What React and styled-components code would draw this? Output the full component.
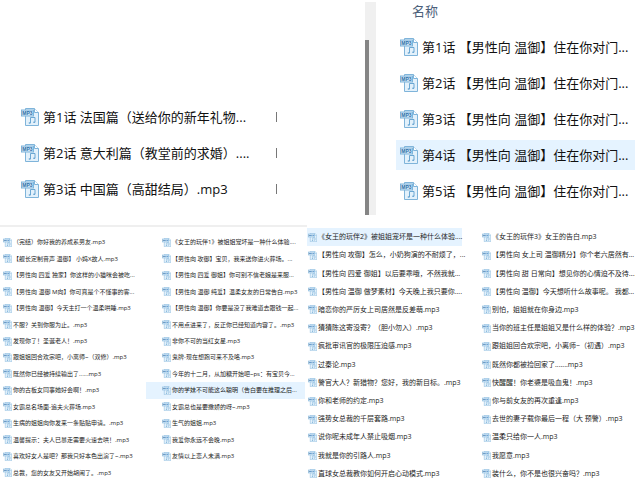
import React from "react";
import styled, { createGlobalStyle } from "styled-components";

const GlobalStyle = createGlobalStyle`
  * {
    box-sizing: border-box;
  }

  body {
    margin: 0;
    background-color: #fff;
    color: #1c1c1c;
    font-family: "Open Sans", "Noto Sans CJK SC", sans-serif;
  }
`;

const endings = [
  "第1话 法国篇（送给你的新年礼物...",
  "第2话 意大利篇（教堂前的求婚）....",
  "第3话 中国篇（高甜结局）.mp3",
];

const episodes = [
  "第1话 【男性向 温御】住在你对门...",
  "第2话 【男性向 温御】住在你对门...",
  "第3话 【男性向 温御】住在你对门...",
  "第4话 【男性向 温御】住在你对门...",
  "第5话 【男性向 温御】住在你对门...",
];

const columnOne = [
  "（完结）你好我的养成系男友.mp3",
  "【舰长定制音声 温御】 小妈X故人.mp3",
  "【男性向 四爱 独家】你这样的小猫咪会被吃...",
  "【男性向 温御 M向】你可真是个不懂事的客...",
  "【男性向 温御】今天主打一个温柔哄睡.mp3",
  "不服？关到你服为止。.mp3",
  "发现你了！圣诞老人！.mp3",
  "跟姐姐回合欢宗吧，小离师~（双修）.mp3",
  "既然你已经被持续输出了......mp3",
  "你的古板女同事她好会啊！.mp3",
  "女霸总名场面-追夫火葬场.mp3",
  "生病的姐姐向你发来一条贴贴申请。.mp3",
  "温馨提示：夫人已暴走需要火速去哄！.mp3",
  "喜欢好女人是吧？那我只好本色出演了~.mp3",
  "总裁，您的女友又开始胡闹了。.mp3",
];

const columnTwo = [
  "《女王的玩伴1》被姐姐宠坏是一种什么体验....",
  "【男性向 攻御】宝贝，我来送你进火葬场。...",
  "【男性向 四爱 御姐】你可别不信老娘是来服...",
  "【男性向 温御 纯爱】温柔女友的日常告白.mp3",
  "【男性向 温御】你要是没了我难道去跟钱一起...",
  "不用点进来了，反正你已经知道内容了。.mp3",
  "非你不可的当红女星.mp3",
  "鬼牌-现在想跑可来不及咯.mp3",
  "今年的十二月，从加糖开始吧~ps：有宝贝今...",
  "你的学妹不可能这么聪明（告白要在推理之后...",
  "女霸总也是要撒娇的呀~.mp3",
  "生气的姐姐.mp3",
  "我爱你永远不会晚.mp3",
  "友情以上恋人未满.mp3",
];

const columnThree = [
  "《女王的玩伴2》被姐姐宠坏是一种什么体验....",
  "【男性向 攻御】怎么，小奶狗演的不耐烦了，...",
  "【男性向 四爱 御姐】以后要乖哦，不然我就...",
  "【男性向 温御 做梦素材】今天晚上我只要你....",
  "暗恋你的严厉女上司居然是反差萌.mp3",
  "猜猜陈这寄没寄？（胆小勿入）.mp3",
  "疯批审讯官的极限压迫感.mp3",
  "过秦论.mp3",
  "警官大人？新猎物？您好，我的新目标。.mp3",
  "你和老师的约定.mp3",
  "强势女总裁的千层套路.mp3",
  "说你呢未成年人禁止吸烟.mp3",
  "我就是你的引路人.mp3",
  "直球女总裁教你如何开启心动模式.mp3",
];

const columnFour = [
  "《女王的玩伴3》女王的告白.mp3",
  "【男性向 女上司 温御精分】你个老六居然有...",
  "【男性向 甜 日常向】想见你的心情迫不及待....",
  "【男性向 温御】今天想听什么故事呢。 我都...",
  "别怕，姐姐就在你身边.mp3",
  "当你的班主任是姐姐又是什么样的体验？.mp3",
  "跟姐姐回合欢宗吧，小离师~（初遇）.mp3",
  "既然你都被捡回家了.......mp3",
  "快醒醒！你老婆是吸血鬼！.mp3",
  "你与前女友的再次重逢.mp3",
  "去世的妻子载你最后一程（大 预警）.mp3",
  "温柔只给你一人.mp3",
  "我愿意.mp3",
  "装什么，你不是也很兴奋吗？.mp3",
];

const Page = styled.main`
  display: flex;
  flex-direction: column;
  min-height: 100vh;
  overflow: hidden;
`;

const TopArea = styled.div`
  display: grid;
  grid-template-columns: 365fr 270fr;
  height: 225px;
`;

const EndingPane = styled.section`
  padding: 102px 0 0 21px;
`;

const EpisodePane = styled.section`
  display: flex;
  gap: 20px;
  padding: 2px 0 10px;
  min-width: 0;
`;

const ScrollTrack = styled.div`
  flex: none;
  width: 11px;
  padding-top: 38px;
  background-color: #f0f0f0;
`;

const ScrollThumb = styled.div`
  width: 4px;
  height: 100%;
  background-color: #858585;
`;

const EpisodeBody = styled.div`
  flex: 1;
  min-width: 0;
`;

const HeaderButton = styled.button`
  display: block;
  height: 19px;
  margin-bottom: 11px;
  padding: 0 16px;
  border: 0;
  background: none;
  color: #4c607a;
  font-family: inherit;
  font-size: 13px;
  line-height: 19px;
`;

const LargeList = styled.ul`
  display: flex;
  flex-direction: column;
  gap: 6px;
  margin: 0;
  padding: 0;
  list-style: none;
`;

const LargeRow = styled.li`
  display: flex;
  align-items: center;
  gap: 4px;
  height: 30px;
  padding-left: ${(props) => (props.$inset ? "4px" : "0")};
  background-color: ${(props) => (props.$selected ? "#e5f3ff" : "transparent")};
  color: #111;
  font-size: 13px;
  line-height: 20px;
  white-space: nowrap;
`;

const EndingName = styled.span`
  width: 229px;
`;

const ColumnMark = styled.span`
  width: 1px;
  height: 10px;
  background-color: #777;
`;

const BottomArea = styled.div`
  flex: 1;
  display: grid;
  grid-template-columns: 307fr 328fr;
`;

const LeftPane = styled.section`
  display: grid;
  grid-template-columns: 146fr 161fr;
  padding: 7px 0 2px;
  border-top: 2px solid #efefef;
`;

const RightPane = styled.section`
  display: grid;
  grid-template-columns: 157fr 171fr;
  padding-top: 3px;
`;

const SmallList = styled.ul`
  display: grid;
  grid-template-rows: repeat(${(props) => props.$rows}, 1fr);
  min-width: 0;
  margin: 0;
  padding: 0;
  list-style: none;
  font-size: ${(props) => props.$size}px;
`;

const SmallRow = styled.li`
  display: flex;
  align-items: center;
  gap: 1px;
  min-width: 0;
  margin-right: 2px;
  padding-left: ${(props) => props.$indent}px;
  background-color: ${(props) => (props.$selected ? "#e5f3ff" : "transparent")};
  line-height: 12px;
  white-space: nowrap;
`;

const IconSvg = styled.svg`
  flex: none;
  width: ${(props) => props.$size}px;
  height: ${(props) => props.$size}px;
`;

const Mp3Icon = ({ size = 18 }) => (
  <IconSvg $size={size} viewBox="0 0 18 18" aria-hidden="true">
    <path d="M4.5.5h9l4 4v13h-13z" fill="#e3f1fb" stroke="#7fb4da" />
    <path d="M13.5.5v4h4" fill="#fff" stroke="#7fb4da" />
    <path
      d="M9.5 15v-5.5h4.5v4.5"
      fill="none"
      stroke="#5f9fce"
      strokeWidth=".9"
    />
    <ellipse cx="8.7" cy="15" rx="1.1" ry=".8" fill="#5f9fce" />
    <ellipse cx="13.2" cy="14.2" rx="1.1" ry=".8" fill="#5f9fce" />
    <rect x=".5" y="2" width="12" height="6" fill="#cfe5f6" stroke="#7fb4da" />
    <text
      x="6.5"
      y="6.8"
      textAnchor="middle"
      fill="#2f70a8"
      fontFamily="Liberation Sans, sans-serif"
      fontSize="5"
      fontWeight="700"
    >
      MP3
    </text>
  </IconSvg>
);

const FileColumn = ({ files, rows, size, indent, selected }) => (
  <SmallList $rows={rows} $size={size}>
    {files.map((name, index) => (
      <SmallRow key={name} $indent={indent} $selected={index === selected}>
        <Mp3Icon size={9} />
        <span>{name}</span>
      </SmallRow>
    ))}
  </SmallList>
);

const App = () => {
  return (
    <Page>
      <GlobalStyle />
      <TopArea>
        <EndingPane>
          <LargeList>
            {endings.map((name) => (
              <LargeRow key={name}>
                <Mp3Icon />
                <EndingName>{name}</EndingName>
                <ColumnMark />
              </LargeRow>
            ))}
          </LargeList>
        </EndingPane>
        <EpisodePane>
          <ScrollTrack>
            <ScrollThumb />
          </ScrollTrack>
          <EpisodeBody>
            <HeaderButton type="button">名称</HeaderButton>
            <LargeList>
              {episodes.map((name, index) => (
                <LargeRow key={name} $inset $selected={index === 3}>
                  <Mp3Icon />
                  <span>{name}</span>
                </LargeRow>
              ))}
            </LargeList>
          </EpisodeBody>
        </EpisodePane>
      </TopArea>
      <BottomArea>
        <LeftPane>
          <FileColumn files={columnOne} rows={15} size={6} indent={3} />
          <FileColumn
            files={columnTwo}
            rows={15}
            size={6}
            indent={16}
            selected={9}
          />
        </LeftPane>
        <RightPane>
          <FileColumn
            files={columnThree}
            rows={14}
            size={7}
            indent={1}
            selected={0}
          />
          <FileColumn files={columnFour} rows={14} size={7} indent={18} />
        </RightPane>
      </BottomArea>
    </Page>
  );
};

export default App;
